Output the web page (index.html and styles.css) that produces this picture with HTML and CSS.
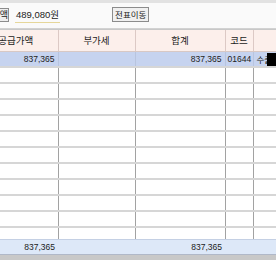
FILE: index.html
```html
<!DOCTYPE html>
<html lang="ko">
<head>
    <meta charset="UTF-8">
    <title>전표</title>
    <link rel="stylesheet" href="styles.css">
</head>
<body>

<!-- 상단 합계 / 이동 -->
<div class="toolbar">
    <span class="lbl">금액</span>
    <span class="amount">489,080원</span>
    <button class="btn">전표이동</button>
</div>

<!-- 그리드 -->
<div class="grid-wrap">
    <table class="grid">
        <colgroup>
            <col class="c-supply">
            <col class="c-vat">
            <col class="c-total">
            <col class="c-code">
            <col class="c-name">
        </colgroup>
        <thead>
            <tr>
                <th>공급가액</th>
                <th>부가세</th>
                <th>합계</th>
                <th>코드</th>
                <th></th>
            </tr>
        </thead>
        <tbody id="rows">
            <tr class="selected">
                <td class="num">837,365</td>
                <td class="num"></td>
                <td class="num">837,365</td>
                <td class="code">01644</td>
                <td class="name">수출<span class="caret"></span></td>
            </tr>
            <tr><td></td><td></td><td></td><td></td><td></td></tr>
            <tr><td></td><td></td><td></td><td></td><td></td></tr>
            <tr><td></td><td></td><td></td><td></td><td></td></tr>
            <tr><td></td><td></td><td></td><td></td><td></td></tr>
            <tr><td></td><td></td><td></td><td></td><td></td></tr>
            <tr><td></td><td></td><td></td><td></td><td></td></tr>
            <tr><td></td><td></td><td></td><td></td><td></td></tr>
            <tr><td></td><td></td><td></td><td></td><td></td></tr>
            <tr><td></td><td></td><td></td><td></td><td></td></tr>
            <tr><td></td><td></td><td></td><td></td><td></td></tr>
            <tr><td></td><td></td><td></td><td></td><td></td></tr>
        </tbody>
    </table>
</div>

<!-- 합계 줄 -->
<div class="footer">
    <div class="f-cell f-supply">837,365</div>
    <div class="f-cell f-vat"></div>
    <div class="f-cell f-total">837,365</div>
</div>

</body>
</html>
```

FILE: styles.css
```css
* {
    box-sizing: border-box;
}
body {
    margin: 0;
    width: 276px;
    height: 260px;
    overflow: hidden;
    background: #c8c8c8;
    font-family: "Liberation Sans", "Noto Sans CJK KR", sans-serif;
}
.toolbar {
    display: flex;
    align-items: center;
    height: 29px;
    border-top: 3px solid #e2e2e2;
    border-bottom: 1px solid #d2d2d2;
    background: #fafafa;
    overflow: hidden;
}
.lbl {
    flex: none;
    width: 9px;
    height: 14px;
    margin-top: -2px;
    border: 1px solid #8c8c8c;
    border-left: none;
    background: #eeeeee;
    font-family: "Noto Sans CJK KR", sans-serif;
    font-size: 9px;
    line-height: 12px;
    direction: rtl;
    overflow: hidden;
    white-space: nowrap;
    color: #222;
}
.amount {
    margin-left: 6px;
    margin-top: -1px;
    padding: 0 1px 1px;
    border-bottom: 1px solid #e6d79a;
    font-size: 9.5px;
    color: #222;
}
.btn {
    margin-left: 52px;
    margin-top: -2px;
    height: 15px;
    padding: 0 2px;
    border: 1px solid #8c8c8c;
    border-radius: 0;
    background: #f0f0f0;
    font-family: "Noto Sans CJK KR", sans-serif;
    font-size: 8.5px;
    line-height: 13px;
    color: #222;
}
.grid-wrap {
    height: 209px;
    margin-top: 1px;
    overflow: hidden;
    background: #fff;
}
.grid {
    border-collapse: collapse;
    table-layout: fixed;
    width: 340px;
    margin-left: -24px;
}
.c-supply { width: 82px; }
.c-vat { width: 77px; }
.c-total { width: 90px; }
.c-code { width: 28px; }
.c-name { width: 63px; }
.grid th {
    height: 21px;
    padding: 0;
    background: #fcefeb;
    border-left: 1px solid #dcc9c5;
    border-bottom: 1px solid #d8c8c4;
    font-family: "Noto Sans CJK KR", sans-serif;
    font-size: 9.5px;
    font-weight: normal;
    color: #1a1a1a;
}
.grid th:first-child {
    border-left: none;
    padding-right: 2px;
}
.grid td {
    height: 16px;
    padding: 0 3px 0 0;
    border-left: 1px solid #a2a2a2;
    border-bottom: 2px solid #d6d6d6;
    font-size: 8.5px;
    color: #222;
    white-space: nowrap;
    overflow: hidden;
}
.grid td:first-child {
    border-left: none;
}
.grid td.num {
    text-align: right;
}
.grid td.code {
    padding-left: 2px;
}
.grid td.name {
    position: relative;
    padding-left: 3px;
    font-family: "Noto Sans CJK KR", sans-serif;
}
.grid tr.selected td {
    background: #c6d3ef;
    border-left-color: #b8c4de;
}
.caret {
    position: absolute;
    left: 13px;
    top: 1px;
    width: 10px;
    height: 13px;
    background: #000;
}
.footer {
    display: flex;
    height: 16px;
    border-top: 1px solid #c4d0e4;
    border-bottom: 1px solid #b0b8c8;
    background: #dde8f8;
}
.f-cell {
    flex: none;
    padding-right: 3px;
    font-size: 8.5px;
    line-height: 14px;
    text-align: right;
    color: #222;
}
.f-supply { width: 58px; }
.f-vat { width: 77px; }
.f-total { width: 90px; }
```
